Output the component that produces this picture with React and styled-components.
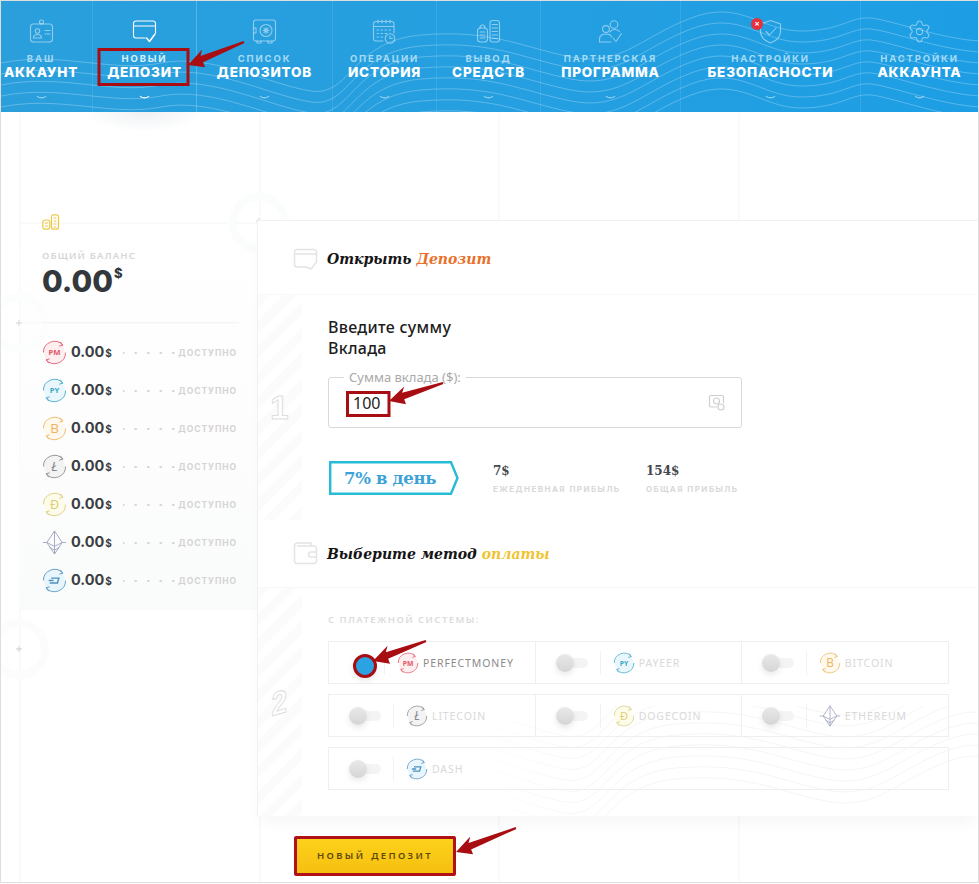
import React from "react";
import styled, { createGlobalStyle } from "styled-components";
import { Settings } from "lucide-react";

const sans = `"Noto Sans", "Open Sans", sans-serif`;
const heavy = `Inter, "Open Sans", sans-serif`;
const slab = `"DejaVu Serif", "Liberation Serif", serif`;
const red = "#a80d12";

const GlobalStyle = createGlobalStyle`
  html, body { margin: 0; padding: 0; background: #fff; }
  * { box-sizing: border-box; }
`;

const Page = styled.div`
  position: relative;
  width: 979px;
  height: 883px;
  overflow: hidden;
  border: 1px solid #dedede;
  background: #fff;
  font-family: ${sans};
`;
const Decor = styled.svg`
  position: absolute;
  top: 0;
  left: 0;
  width: 979px;
  height: 884px;
  pointer-events: none;
`;
const Notes = styled(Decor)`
  z-index: 10;
`;

/* header */
const Header = styled.header`
  position: relative;
  height: 111px;
  display: grid;
  grid-template-columns: 92px 104px 136px 104px 104px 140px 180px 117px;
  background: linear-gradient(90deg, #2a9fdc 0%, #259fe0 50%, #1d9ee4 100%);
`;
const Waves = styled.svg`
  position: absolute;
  top: 0;
  left: 0;
  width: 979px;
  height: 111px;
  pointer-events: none;
`;
const NavItem = styled.a`
  position: relative;
  display: flex;
  flex-direction: column;
  align-items: center;
  padding: 18px ${(p) => (p.$lead ? 11 : 0)}px 0 0;
  border-right: 1px solid rgba(255, 255, 255, ${(p) => (p.$active ? 0.22 : 0.1)});
  color: #fff;
  &:last-child { border-right: 0; }
  ${(p) =>
    p.$active &&
    `&::after {
      content: "";
      position: absolute;
      left: -10px;
      right: -10px;
      top: 111px;
      height: 20px;
      background: radial-gradient(ellipse at 50% 0, rgba(170,185,195,.2), rgba(255,255,255,0) 70%);
    }`}
`;
const NavIcon = styled.svg`
  width: 25px;
  height: 25px;
  fill: none;
  stroke: ${(p) => (p.$active ? "#fff" : "rgba(255,255,255,.48)")};
  stroke-width: 1.1;
  stroke-linecap: round;
  stroke-linejoin: round;
`;
const GearIcon = styled(Settings)`
  width: 25px;
  height: 25px;
  color: rgba(255, 255, 255, 0.48);
`;
const IconBox = styled.span`
  position: relative;
  display: flex;
  height: 25px;
`;
const AlertDot = styled.span`
  position: absolute;
  left: -7px;
  top: -1px;
  width: 12px;
  height: 12px;
  border-radius: 50%;
  background: #e5303d;
  color: #fff;
  font: 700 9px/12px ${sans};
  text-align: center;
`;
const NavSub = styled.span`
  margin-top: 9px;
  font: 700 9.5px/11px ${heavy};
  letter-spacing: 1.85px;
  color: ${(p) => (p.$active ? "#d8f0fc" : "#a5dbf5")};
`;
const NavMain = styled.span`
  margin-top: 0;
  font: 800 13.5px/16px ${heavy};
  letter-spacing: 0.8px;
`;
const NavChevron = styled.svg`
  margin-top: 15px;
  width: 11px;
  height: 5px;
  fill: none;
  stroke: rgba(255, 255, 255, ${(p) => (p.$active ? 1 : 0.55)});
  stroke-width: 1.2;
`;

/* main */
const Main = styled.main`
  position: relative;
  display: flex;
  align-items: flex-start;
`;
const Sidebar = styled.aside`
  width: 238px;
  height: 400px;
  margin: 98px 0 0 18px;
  padding: 3px 20px 0 23px;
  background: linear-gradient(180deg, rgba(255, 255, 255, 0) 0%, rgba(252, 252, 252, 0.6) 55%, #fafbfb 100%);
`;
const BalanceLabel = styled.div`
  margin-top: 15px;
  font: 600 9.5px/12px ${sans};
  letter-spacing: 1.2px;
  color: #d6d6d6;
`;
const BalanceValue = styled.div`
  font: 800 30px/38px ${heavy};
  color: #33383c;
  & > sup {
    font-size: 13px;
    line-height: 0;
    vertical-align: 14px;
    margin-left: 1px;
  }
`;
const Divider = styled.div`
  height: 1px;
  margin-top: 22px;
  background: #f4f4f4;
`;
const BalanceList = styled.div`
  display: flex;
  flex-direction: column;
  gap: 13px;
  margin-top: 17px;
`;
const BalanceRow = styled.div`
  display: flex;
  align-items: center;
  height: 25px;
`;
const Amount = styled.span`
  margin-left: 4px;
  font: 700 14.5px/18px ${heavy};
  color: #3a3e42;
  & > small {
    font-size: 10px;
    margin-left: 1px;
  }
`;
const Dots = styled.span`
  flex: 1;
  margin: 0 1px 0 11px;
  height: 2px;
  background: radial-gradient(circle, #d0d0d0 1px, transparent 1.2px) -6px 0 / 12.5px 2px repeat-x;
`;
const Available = styled.span`
  font: 700 8.5px/12px ${heavy};
  letter-spacing: 0.95px;
  color: #d4d4d4;
`;

const ContentColumn = styled.div`
  flex: 1;
  margin-top: 108px;
  min-width: 0;
`;
const Panel = styled.section`
  position: relative;
  border-top: 1px solid #f1f1f1;
  border-left: 1px solid #f1f1f1;
  background: #fff;
  box-shadow: 0 10px 14px -4px rgba(0, 0, 0, 0.04);
`;
const SectionHead = styled.div`
  display: flex;
  align-items: center;
  gap: 9px;
  height: ${(p) => p.$h}px;
  padding: ${(p) => p.$pad}px 0 0 35px;
  border-bottom: 1px solid #f8f8f8;
`;
const HeadIcon = styled.svg`
  width: 25px;
  height: 25px;
  fill: none;
  stroke: #e4e4e4;
  stroke-width: 1.5;
  stroke-linejoin: round;
`;
const Title = styled.h2`
  margin: 0;
  font: italic 700 14px/24px "DejaVu Serif", "Liberation Serif", serif;
  color: #151515;
  & > em { color: ${(p) => p.$accent}; }
`;
const SectionBody = styled.div`
  position: relative;
  display: flex;
  height: ${(p) => p.$h}px;
  overflow: hidden;
`;
const Stripe = styled.div`
  flex: none;
  width: 44px;
  display: flex;
  align-items: center;
  justify-content: center;
  background: repeating-linear-gradient(135deg, #fbfbfb 0 9px, #fff 9px 18px);
`;
const StepNumber = styled.span`
  font: 700 33px/33px "Liberation Sans", sans-serif;
  color: #fff;
  -webkit-text-stroke: 1px #dedede;
  transform: ${(p) => (p.$tilt ? "skewY(-16deg) scaleX(.85)" : "none")};
  margin-left: -1px;
`;
const BodyContent = styled.div`
  position: relative;
  flex: 1;
  padding-left: 26px;
`;
const StepHeading = styled.h3`
  margin: 22px 0 0;
  font: 500 16px/21px ${sans};
  letter-spacing: 0.3px;
  color: #1c1c1c;
`;
const AmountField = styled.label`
  position: relative;
  display: flex;
  align-items: center;
  justify-content: space-between;
  width: 414px;
  height: 51px;
  margin-top: 18px;
  padding: 0 16px 0 24px;
  border: 1px solid #d9d9d9;
  border-radius: 3px;
`;
const FieldLegend = styled.span`
  position: absolute;
  top: -8px;
  left: 15px;
  padding: 0 5px;
  background: #fff;
  font: 400 13px/15px ${sans};
  color: #aaa;
`;
const AmountInput = styled.input`
  width: 60px;
  margin-top: 1px;
  border: 0;
  outline: 0;
  padding: 0;
  background: transparent;
  font: 400 16px/20px ${sans};
  color: #1c1c1c;
`;
const FieldIcon = styled.svg`
  width: 17px;
  height: 17px;
  fill: none;
  stroke: #cfcfcf;
  stroke-width: 1.2;
`;
const RateRow = styled.div`
  display: flex;
  align-items: flex-start;
  margin: 33px 0 0 1px;
`;
const RateBadge = styled.div`
  position: relative;
  width: 130px;
  height: 34px;
  margin-right: 34px;
  padding-left: 15px;
  font: 700 16.5px/35px ${slab};
  letter-spacing: -0.3px;
  color: #3ba2d8;
  white-space: nowrap;
`;
const BadgeShape = styled.svg`
  position: absolute;
  top: 0;
  left: 0;
  width: 130px;
  height: 34px;
  fill: none;
  stroke: #27bcd6;
  stroke-width: 2.4;
`;
const Stat = styled.div`
  width: ${(p) => p.$w}px;
`;
const StatValue = styled.div`
  font: 700 12px/18px ${slab};
  color: #45494c;
  padding-top: 1px;
`;
const StatLabel = styled.div`
  margin-top: 3px;
  font: 700 8px/12px ${heavy};
  letter-spacing: 1.45px;
  white-space: nowrap;
  color: #d8d8d8;
`;
const PayCaption = styled.div`
  margin-top: 26px;
  font: 600 9.5px/12px ${sans};
  letter-spacing: 1.45px;
  color: #dcdcdc;
`;
const PayList = styled.div`
  position: relative;
  display: flex;
  flex-direction: column;
  gap: 10px;
  width: 621px;
  margin-top: 15px;
`;
const PayRow = styled.div`
  display: flex;
  height: 43px;
  border: 1px solid #efefef;
`;
const PayCell = styled.div`
  display: flex;
  align-items: center;
  width: 207px;
  padding-left: 20px;
  border-right: 1px solid #efefef;
  &:first-child { width: 207.5px; }
  &:last-child { border-right: 0; }
`;
const Toggle = styled.span`
  position: relative;
  flex: none;
  width: ${(p) => (p.$on ? 19 : 32)}px;
  height: 18px;
  margin-left: ${(p) => (p.$on ? 4 : 0)}px;
  &::before {
    content: "";
    position: absolute;
    top: 4px;
    left: 2px;
    right: 0;
    height: 10px;
    border-radius: 5px;
    background: ${(p) => (p.$on ? "transparent" : "#f4f4f4")};
  }
  &::after {
    content: "";
    position: absolute;
    top: 0;
    left: 0;
    width: 18px;
    height: 18px;
    border-radius: 50%;
    background: ${(p) => (p.$on ? "#2ba3e3" : "linear-gradient(180deg, #e9e9e9, #d5d5d5)")};
    border: ${(p) => (p.$on ? `3px solid ${red}` : "0")};
    box-shadow: 0 3px 6px rgba(0, 0, 0, 0.09);
  }
`;
const PaySep = styled.span`
  flex: none;
  width: 1px;
  height: 24px;
  margin: 0 12px;
  background: #f1f1f1;
`;
const PayName = styled.span`
  margin-left: 4px;
  font: 400 10.5px/14px ${sans};
  letter-spacing: 0.9px;
  color: ${(p) => (p.$on ? "#8b8b8b" : "#d9d9d9")};
`;
const PanelWaves = styled.svg`
  position: absolute;
  right: 0;
  bottom: 0;
  width: 722px;
  height: 110px;
  pointer-events: none;
  mask-image: linear-gradient(90deg, transparent 28%, #000 48%);
`;
const SubmitButton = styled.button`
  display: block;
  position: relative;
  width: 162px;
  height: 40px;
  margin: 20px 0 0 37px;
  padding: 0;
  border: 3px solid #b01116;
  border-radius: 2px;
  background: linear-gradient(180deg, #fcd21c, #f6bf10);
  font: 600 9.5px/12px ${sans};
  letter-spacing: 2.35px;
  word-spacing: 1px;
  color: #5f4a05;
`;
const CoinSvg = styled.svg`
  flex: none;
  width: ${(p) => p.$size}px;
  height: ${(p) => p.$size}px;
  fill: none;
  stroke: ${(p) => p.$color};
  stroke-width: 0.9;
  & > text {
    fill: ${(p) => p.$color};
    stroke: none;
    text-anchor: middle;
  }
`;

const COINS = {
  pm: { color: "#e25668", bg: "#fdeef0", text: "PM", fs: 8, name: "PERFECTMONEY" },
  py: { color: "#3aa7c6", bg: "#e9f7fc", text: "PY", fs: 8, name: "PAYEER" },
  btc: { color: "#eeb45f", bg: "#fff8ec", text: "B", fs: 14, name: "BITCOIN" },
  ltc: { color: "#85878a", bg: "#f3f3f3", text: "Ł", fs: 14, italic: true, name: "LITECOIN" },
  doge: { color: "#dccb70", bg: "#fdfbe9", text: "Ð", fs: 13, name: "DOGECOIN" },
  eth: { color: "#9aa0bd", name: "ETHEREUM" },
  dash: { color: "#4c93c0", bg: "#e9f5fc", name: "DASH" },
};

const CoinIcon = ({ id, size = 25 }) => {
  const c = COINS[id];
  if (id === "eth") {
    return (
      <CoinSvg viewBox="0 0 26 26" $size={size} $color={c.color}>
        <path d="M13 1L21 13L13 25L5 13ZM13 1V25M5 13L13 17L21 13M1 13H5M21 13H25M8 18L13 21L18 18" />
      </CoinSvg>
    );
  }
  return (
    <CoinSvg viewBox="0 0 26 26" $size={size} $color={c.color}>
      <circle cx="13" cy="13" r="11" fill={c.bg} stroke="none" />
      <path d="M1.5 13A11.5 11.5 0 0 1 21.5 5.2M19 1.8L21.7 5.4L18 6.4M24.5 13A11.5 11.5 0 0 1 4.5 20.8M7 24.2L4.3 20.6L8 19.6" />
      {c.text && (
        <text x="13" y={c.fs > 10 ? 18 : 16} fontSize={c.fs} fontWeight={c.fs > 10 ? 400 : 700} fontStyle={c.italic ? "italic" : "normal"} fontFamily='"Open Sans", sans-serif'>
          {c.text}
        </text>
      )}
      {id === "dash" && <path d="M8 15.5H16L17.5 10.5H9.5M7 13H12" strokeWidth="1.5" />}
    </CoinSvg>
  );
};

const wavePath = (o) =>
  `M0 ${62 + o} C60 ${50 + o} 110 ${72 + o} 160 ${62 + o} S270 ${84 + o} 310 ${90 + o} S350 ${40 + o} 420 ${34 + o} S520 ${46 + o} 570 ${56 + o} S640 ${36 + o} 690 ${17 + o} S760 ${30 + o} 800 ${30 + o} S850 ${15 + o} 870 ${17 + o} S940 ${38 + o} 979 ${40 + o}`;
const WAVE_OFFSETS = [0, 11, 22, 33, 44, 55, 66, 77];

const ICONS = {
  account: (
    <>
      <rect x="1.5" y="5" width="22" height="18" rx="3" />
      <circle cx="12.5" cy="3" r="2" />
      <circle cx="8.5" cy="12" r="2.2" />
      <path d="M4.5 19C4.5 16 6.5 15.5 8.5 15.5S12.5 16 12.5 19ZM16 11.5H21M16 15H21" />
    </>
  ),
  card: (
    <>
      <path d="M13 19H4A2.5 2.5 0 0 1 1.5 16.5V4.5A2.5 2.5 0 0 1 4 2H21A2.5 2.5 0 0 1 23.5 4.5V14M1.5 7H23.5" />
      <path d="M14.5 19L17.5 22.5L23 15" strokeWidth="1.5" />
    </>
  ),
  safe: (
    <>
      <rect x="1.5" y="1" width="22" height="21" rx="2.5" />
      <circle cx="14" cy="11.5" r="6" />
      <path d="M14 8.5V14.5M11 11.5H17M12 9.5L16 13.5M16 9.5L12 13.5M1.5 9H4V14H1.5M5 22V24H9V22M16 22V24H20V22" />
    </>
  ),
  calendar: (
    <>
      <path d="M11 22H4A2.5 2.5 0 0 1 1.5 19.5V5A2.5 2.5 0 0 1 4 2.5H19.5A2.5 2.5 0 0 1 22 5V14M1.5 7.5H22M6 1V4M10 1V4M14 1V4M18 1V4" />
      <path d="M5 11H6.5M9 11H10.5M13 11H14.5M17 11H18.5M5 14.5H6.5M9 14.5H10.5M13 14.5H14.5M5 18H6.5M9 18H10.5" />
      <circle cx="18" cy="19.5" r="4.8" />
      <path d="M18 17V19.5H20.5" />
    </>
  ),
  money: (
    <>
      <rect x="1.5" y="9" width="10" height="14" rx="3" />
      <rect x="14" y="1.5" width="9.5" height="21.5" rx="2.5" />
      <path d="M4 13H9M4 16H9M4 19H9M16 5.5H21.5M16 9H21.5M16 12.5H21.5M16 16H21.5M16 19.5H21.5M4 9C4 5 9 5 9 9" />
    </>
  ),
  partner: (
    <>
      <circle cx="16" cy="5.5" r="3.8" />
      <circle cx="8" cy="10" r="3.4" />
      <path d="M1.5 23V20C1.5 16 5 15 8 15S13 16 13.5 18M1.5 23H13M12 13C14 9.8 19 9.8 21.5 12.5" />
      <path d="M15 19L18 22.5L23.5 14.5" />
    </>
  ),
  shield: (
    <>
      <path d="M12.5 1.5L22.5 5V12C22.5 18 18 22 12.5 24C7 22 2.5 18 2.5 12V5Z" />
      <path d="M8 12.5L11.5 16L18 9" />
    </>
  ),
};

const NAV = [
  { icon: "account", sub: "ВАШ", main: "АККАУНТ", lead: true },
  { icon: "card", sub: "НОВЫЙ", main: "ДЕПОЗИТ", active: true },
  { icon: "safe", sub: "СПИСОК", main: "ДЕПОЗИТОВ" },
  { icon: "calendar", sub: "ОПЕРАЦИИ", main: "ИСТОРИЯ" },
  { icon: "money", sub: "ВЫВОД", main: "СРЕДСТВ" },
  { icon: "partner", sub: "ПАРТНЕРСКАЯ", main: "ПРОГРАММА" },
  { icon: "shield", sub: "НАСТРОЙКИ", main: "БЕЗОПАСНОСТИ", alert: true },
  { icon: "gear", sub: "НАСТРОЙКИ", main: "АККАУНТА" },
];
const BALANCES = ["pm", "py", "btc", "ltc", "doge", "eth", "dash"];
const PAY_ROWS = [["pm", "py", "btc"], ["ltc", "doge", "eth"], ["dash"]];

// arrow from tail to tip, thin at the tail and widening into the head
const arrow = ([tx, ty], [x, y]) => {
  const len = Math.hypot(x - tx, y - ty);
  const ux = (x - tx) / len;
  const uy = (y - ty) / len;
  const pt = (along, side) => `${x - ux * along - uy * side},${y - uy * along + ux * side}`;
  return [
    pt(len, 1),
    pt(15, 3.6),
    pt(19, 9),
    `${x},${y}`,
    pt(15, -8.5),
    pt(15, -3.2),
    pt(len, -1),
  ].join(" ");
};

const ARROWS = [
  [[243, 41], [187, 64]],
  [[442, 382], [388, 400]],
  [[425, 640], [372, 660]],
  [[515, 827], [455, 851]],
];

const BackgroundDecor = () => (
  <Decor viewBox="0 0 979 884" fill="none" stroke="#f5f5f5">
    <path d="M19 112V884M259 112V884M498 112V884M738 112V884" />
    <path d="M18 222H257M18 322H240" />
    <circle cx="258" cy="222" r="26" strokeWidth="8" stroke="#fbfcfc" />
    <circle cx="18" cy="322" r="26" strokeWidth="8" stroke="#fcfdfd" />
    <circle cx="18" cy="648" r="26" strokeWidth="8" stroke="#fcfcfc" />
    <path d="M255 220H261M258 217V223M15 322H21M18 319V325M15 648H21M18 645V651" stroke="#cfcfcf" />
  </Decor>
);

const App = () => (
  <>
    <GlobalStyle />
    <Page>
      <BackgroundDecor />
      <Header>
        <Waves viewBox="0 0 979 111" fill="none" stroke="rgba(255,255,255,.26)">
          {WAVE_OFFSETS.map((o) => (
            <path key={o} d={wavePath(o)} />
          ))}
        </Waves>
        {NAV.map((n) => (
          <NavItem key={n.main} $active={n.active} $lead={n.lead}>
            <IconBox>
              {n.icon === "gear" ? (
                <GearIcon strokeWidth={1} />
              ) : (
                <NavIcon viewBox="0 0 25 25" $active={n.active}>
                  {ICONS[n.icon]}
                </NavIcon>
              )}
              {n.alert && <AlertDot>×</AlertDot>}
            </IconBox>
            <NavSub $active={n.active}>{n.sub}</NavSub>
            <NavMain>{n.main}</NavMain>
            <NavChevron viewBox="0 0 11 5" $active={n.active}>
              <path d="M1 1C3 3.5 8 3.5 10 1" />
            </NavChevron>
          </NavItem>
        ))}
      </Header>
      <Main>
        <Sidebar>
          <svg width="18" height="16" viewBox="0 0 18 16" fill="none" stroke="#ecc94a" strokeWidth="1.2">
            <rect x="0.8" y="6" width="7" height="9.2" rx="2.5" />
            <rect x="9.5" y="0.8" width="7" height="14.4" rx="2" />
            <path d="M3 9H6M3 12H6M11.5 4H14.5M11.5 7H14.5M11.5 10H14.5M11.5 13H14.5" />
          </svg>
          <BalanceLabel>ОБЩИЙ БАЛАНС</BalanceLabel>
          <BalanceValue>
            0.00<sup>$</sup>
          </BalanceValue>
          <Divider />
          <BalanceList>
            {BALANCES.map((id) => (
              <BalanceRow key={id}>
                <CoinIcon id={id} />
                <Amount>
                  0.00<small>$</small>
                </Amount>
                <Dots />
                <Available>ДОСТУПНО</Available>
              </BalanceRow>
            ))}
          </BalanceList>
        </Sidebar>
        <ContentColumn>
          <Panel>
            <SectionHead $h={74} $pad={3}>
              <HeadIcon viewBox="0 0 25 25">
                <path d="M13 20H4A2.5 2.5 0 0 1 1.5 17.5V5A2.5 2.5 0 0 1 4 2.5H21A2.5 2.5 0 0 1 23.5 5V15L18 22L13 20ZM1.5 7H23.5" />
              </HeadIcon>
              <Title $accent="#e8722c">
                Открыть <em>Депозит</em>
              </Title>
            </SectionHead>
            <SectionBody $h={225}>
              <Stripe>
                <StepNumber>1</StepNumber>
              </Stripe>
              <BodyContent>
                <StepHeading>
                  Введите сумму
                  <br />
                  Вклада
                </StepHeading>
                <AmountField>
                  <FieldLegend>Сумма вклада ($):</FieldLegend>
                  <AmountInput defaultValue="100" readOnly />
                  <FieldIcon viewBox="0 0 17 17">
                    <path d="M9 13H3A1.5 1.5 0 0 1 1.5 11.5V3A1.5 1.5 0 0 1 3 1.5H14A1.5 1.5 0 0 1 15.5 3V9" />
                    <circle cx="8.5" cy="7" r="3" />
                    <circle cx="13" cy="13" r="3" />
                  </FieldIcon>
                </AmountField>
                <RateRow>
                  <RateBadge>
                    <BadgeShape viewBox="0 0 130 34">
                      <path d="M1.2 1.2H122L128.5 17L122 32.8H1.2Z" />
                    </BadgeShape>
                    7% в день
                  </RateBadge>
                  <Stat $w={153}>
                    <StatValue>7$</StatValue>
                    <StatLabel>ЕЖЕДНЕВНАЯ ПРИБЫЛЬ</StatLabel>
                  </Stat>
                  <Stat $w={100}>
                    <StatValue>154$</StatValue>
                    <StatLabel>ОБЩАЯ ПРИБЫЛЬ</StatLabel>
                  </Stat>
                </RateRow>
              </BodyContent>
            </SectionBody>
            <SectionHead $h={68} $pad={0}>
              <HeadIcon viewBox="0 0 25 25">
                <path d="M4 5H21A2.5 2.5 0 0 1 23.5 7.5V20A2.5 2.5 0 0 1 21 22.5H4A2.5 2.5 0 0 1 1.5 20V5A3 3 0 0 1 4 2H18V5M23.5 11H18A2.5 2.5 0 0 0 18 16H23.5" />
              </HeadIcon>
              <Title $accent="#efc431">
                Выберите метод <em>оплаты</em>
              </Title>
            </SectionHead>
            <SectionBody $h={228}>
              <PanelWaves viewBox="0 100 722 110" fill="none" stroke="#f5f5f5">
                {WAVE_OFFSETS.concat([88, 99]).map((o) => (
                  <path key={o} d={wavePath(o + 40)} />
                ))}
              </PanelWaves>
              <Stripe>
                <StepNumber $tilt>2</StepNumber>
              </Stripe>
              <BodyContent>
                <PayCaption>С ПЛАТЕЖНОЙ СИСТЕМЫ:</PayCaption>
                <PayList>
                  {PAY_ROWS.map((row) => (
                    <PayRow key={row[0]}>
                      {row.map((id) => {
                        const on = id === "pm";
                        return (
                          <PayCell key={id}>
                            <Toggle $on={on} />
                            <PaySep />
                            <CoinIcon id={id} size={22} />
                            <PayName $on={on}>{COINS[id].name}</PayName>
                          </PayCell>
                        );
                      })}
                    </PayRow>
                  ))}
                </PayList>
              </BodyContent>
            </SectionBody>
          </Panel>
          <SubmitButton>НОВЫЙ ДЕПОЗИТ</SubmitButton>
        </ContentColumn>
      </Main>
      <Notes viewBox="0 0 979 884" fill="none" stroke={red} strokeWidth="3">
        <rect x="98" y="48.5" width="89" height="35" />
        <rect x="346.5" y="391.5" width="41.5" height="23" />
        {ARROWS.map(([a, b]) => (
          <polygon key={a.join()} points={arrow(a, b)} fill={red} stroke="none" />
        ))}
      </Notes>
    </Page>
  </>
);

export default App;
